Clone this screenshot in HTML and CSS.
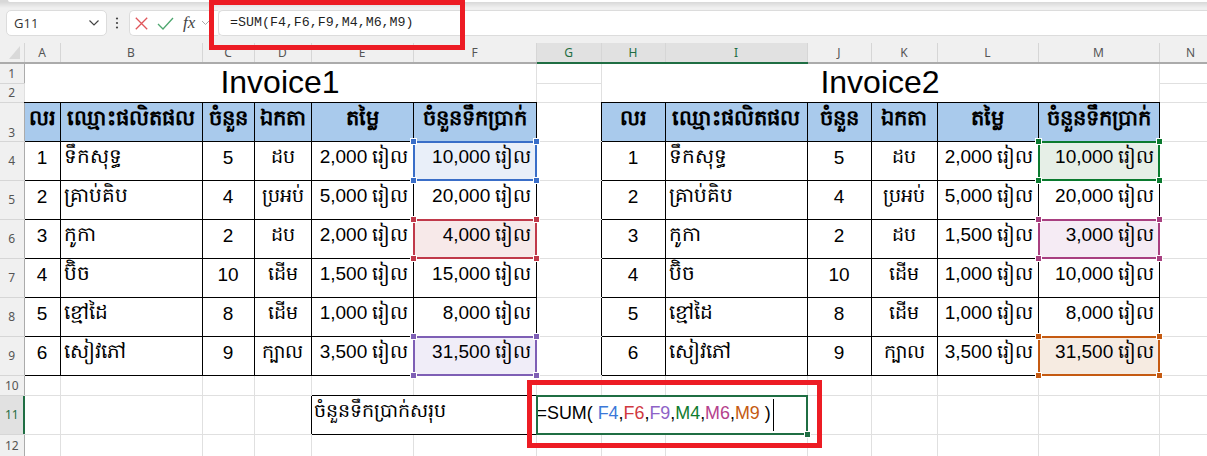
FILE: index.html
```html
<!DOCTYPE html>
<html lang="km">
<head>
<meta charset="utf-8">
<title>Invoice</title>
<link rel="stylesheet" href="styles.css">
</head>
<body>
<div class="ribbon"><div class="ribbon-lip"></div></div>
<div class="toolbar">
  <div class="namebox"><span>G11</span>
    <svg class="chev" width="12" height="8" viewBox="0 0 12 8"><path d="M1.5 1.5 6 6l4.5-4.5" fill="none" stroke="#444" stroke-width="1.2"/></svg>
  </div>
  <svg class="dots" width="4" height="14" viewBox="0 0 4 14"><circle cx="2" cy="2.5" r="1.1" fill="#444"/><circle cx="2" cy="7" r="1.1" fill="#444"/><circle cx="2" cy="11.5" r="1.1" fill="#444"/></svg>
  <div class="fxbox">
    <svg width="13" height="13" viewBox="0 0 13 13"><path d="M.8.8 12.2 12.2M12.2.8.8 12.2" stroke="#e0565b" stroke-width="1.3" fill="none"/></svg>
    <svg class="check" width="17" height="13" viewBox="0 0 17 13"><path d="M1 7 6 12 16 1" stroke="#4ea76f" stroke-width="1.3" fill="none"/></svg>
    <span class="fx">fx</span>
    <svg width="9" height="6" viewBox="0 0 9 6"><path d="M1 1l3.5 3.5L8 1" fill="none" stroke="#aaa" stroke-width="1"/></svg>
  </div>
  <div class="formula">=SUM(F4,F6,F9,M4,M6,M9)</div>
</div>
<table class="sheet">
  <colgroup>
    <col class="c-rh"><col class="c-a"><col class="c-b"><col class="c-c"><col class="c-d"><col class="c-e"><col class="c-f"><col class="c-g">
    <col class="c-h"><col class="c-i"><col class="c-j"><col class="c-k"><col class="c-l"><col class="c-m"><col class="c-n">
  </colgroup>
  <tr class="r-head">
    <th class="corner"><svg class="tri" width="11" height="13" viewBox="0 0 11 13"><path d="M11 0V13H0Z" fill="#d9d9d9"/></svg></th><th>A</th><th>B</th><th>C</th><th>D</th><th>E</th><th>F</th><th class="sel">G</th><th class="sel">H</th><th class="sel">I</th><th>J</th><th>K</th><th>L</th><th>M</th><th>N</th>
  </tr>
  <tr class="r-1">
    <th class="rh">1</th><td class="title" colspan="6" rowspan="2">Invoice1</td><td></td><td class="title" colspan="6" rowspan="2">Invoice2</td><td></td>
  </tr>
  <tr class="r-2">
    <th class="rh">2</th><td></td><td></td>
  </tr>
  <tr class="r-3">
    <th class="rh bottom">3</th>
    <td class="hd">លរ</td><td class="hd">ឈ្មោះផលិតផល</td><td class="hd">ចំនួន</td><td class="hd">ឯកតា</td><td class="hd">តម្លៃ</td><td class="hd">ចំនួនទឹកប្រាក់</td><td class="edge-r"></td>
    <td class="hd">លរ</td><td class="hd">ឈ្មោះផលិតផល</td><td class="hd">ចំនួន</td><td class="hd">ឯកតា</td><td class="hd">តម្លៃ</td><td class="hd">ចំនួនទឹកប្រាក់</td><td></td>
  </tr>
  <tr class="r-d">
    <th class="rh">4</th>
    <td class="b ctr">1</td><td class="b name">ទឹកសុទ្ធ</td><td class="b ctr">5</td><td class="b ctr">ដប</td><td class="b amt">2,000 រៀល</td><td class="b amt pick pick-blue">10,000 រៀល</td><td class="edge-r"></td>
    <td class="b ctr">1</td><td class="b name">ទឹកសុទ្ធ</td><td class="b ctr">5</td><td class="b ctr">ដប</td><td class="b amt">2,000 រៀល</td><td class="b amt pick pick-green">10,000 រៀល</td><td></td>
  </tr>
  <tr class="r-d">
    <th class="rh">5</th>
    <td class="b ctr">2</td><td class="b name">គ្រាប់គិប</td><td class="b ctr">4</td><td class="b ctr">ប្រអប់</td><td class="b amt">5,000 រៀល</td><td class="b amt">20,000 រៀល</td><td class="edge-r"></td>
    <td class="b ctr">2</td><td class="b name">គ្រាប់គិប</td><td class="b ctr">4</td><td class="b ctr">ប្រអប់</td><td class="b amt">5,000 រៀល</td><td class="b amt">20,000 រៀល</td><td></td>
  </tr>
  <tr class="r-d">
    <th class="rh">6</th>
    <td class="b ctr">3</td><td class="b name">កូកា</td><td class="b ctr">2</td><td class="b ctr">ដប</td><td class="b amt">2,000 រៀល</td><td class="b amt pick pick-red">4,000 រៀល</td><td class="edge-r"></td>
    <td class="b ctr">3</td><td class="b name">កូកា</td><td class="b ctr">2</td><td class="b ctr">ដប</td><td class="b amt">1,500 រៀល</td><td class="b amt pick pick-pink">3,000 រៀល</td><td></td>
  </tr>
  <tr class="r-d">
    <th class="rh">7</th>
    <td class="b ctr">4</td><td class="b name">ប៊ិច</td><td class="b ctr">10</td><td class="b ctr">ដើម</td><td class="b amt">1,500 រៀល</td><td class="b amt">15,000 រៀល</td><td class="edge-r"></td>
    <td class="b ctr">4</td><td class="b name">ប៊ិច</td><td class="b ctr">10</td><td class="b ctr">ដើម</td><td class="b amt">1,000 រៀល</td><td class="b amt">10,000 រៀល</td><td></td>
  </tr>
  <tr class="r-d">
    <th class="rh">8</th>
    <td class="b ctr">5</td><td class="b name">ខ្មៅដៃ</td><td class="b ctr">8</td><td class="b ctr">ដើម</td><td class="b amt">1,000 រៀល</td><td class="b amt">8,000 រៀល</td><td class="edge-r"></td>
    <td class="b ctr">5</td><td class="b name">ខ្មៅដៃ</td><td class="b ctr">8</td><td class="b ctr">ដើម</td><td class="b amt">1,000 រៀល</td><td class="b amt">8,000 រៀល</td><td></td>
  </tr>
  <tr class="r-d">
    <th class="rh">9</th>
    <td class="b ctr">6</td><td class="b name">សៀវភៅ</td><td class="b ctr">9</td><td class="b ctr">ក្បាល</td><td class="b amt">3,500 រៀល</td><td class="b amt pick pick-purple">31,500 រៀល</td><td class="edge-r"></td>
    <td class="b ctr">6</td><td class="b name">សៀវភៅ</td><td class="b ctr">9</td><td class="b ctr">ក្បាល</td><td class="b amt">3,500 រៀល</td><td class="b amt pick pick-orange">31,500 រៀល</td><td></td>
  </tr>
  <tr class="r-10">
    <th class="rh">10</th><td></td><td></td><td></td><td></td><td class="edge-b"></td><td class="edge-b"></td><td></td><td></td><td></td><td></td><td></td><td></td><td></td><td></td>
  </tr>
  <tr class="r-d">
    <th class="rh sel-row">11</th><td></td><td></td><td></td><td class="edge-r"></td>
    <td class="b name total" colspan="2">ចំនួនទឹកប្រាក់សរុប</td>
    <td class="editing" colspan="3"><span class="edit-text">=SUM( <i class="k-blue">F4</i>,<i class="k-red">F6</i>,<i class="k-purple">F9</i>,<i class="k-green">M4</i>,<i class="k-pink">M6</i>,<i class="k-orange">M9</i> )</span><span class="caret"></span></td>
    <td></td><td></td><td></td><td></td><td></td><td></td>
  </tr>
  <tr class="r-12">
    <th class="rh">12</th><td></td><td></td><td></td><td></td><td></td><td></td><td></td><td></td><td></td><td></td><td></td><td></td><td></td><td></td>
  </tr>
</table>
<div class="callout callout-top"></div>
<div class="callout callout-bottom"></div>
</body>
</html>
```
FILE: styles.css
```css
* { box-sizing: border-box; }
html, body { margin: 0; padding: 0; }
body {
  width: 1207px; height: 456px; overflow: hidden; position: relative;
  background: #fff; color: #000;
  font-family: "Liberation Sans", sans-serif;
}
.ribbon {
  height: 10px; padding-left: 8px;
  background: linear-gradient(#d8d8d8 20%, #f0f0f0 80%);
}
.ribbon-lip { height: 2px; background: #fff; border-radius: 0 0 0 4px; }
.toolbar {
  height: 33px; background: #f0f0f0; display: flex; align-items: flex-start;
  padding-left: 6px;
}
.namebox {
  width: 101px; height: 26px; background: #fff; border: 1px solid #dcdcdc; border-radius: 5px;
  display: flex; align-items: center; justify-content: space-between; padding: 0 6px 0 7px;
  font: 13px "Open Sans", sans-serif; color: #333;
}
.dots { margin: 6px 10px 0 8px; }
.fxbox {
  width: 89px; height: 26px; background: #fff; border: 1px solid #dcdcdc; border-radius: 5px 0 0 5px; border-right: 0;
  display: flex; align-items: center; gap: 9px; padding-left: 5px;
}
.fx { font: italic 17px "Liberation Serif", serif; color: #444; margin-right: -3px; }
.formula {
  flex: 1; height: 26px; background: #fff; border: 1px solid #dcdcdc; border-right: 0; border-radius: 5px 0 0 5px;
  padding: 3px 0 0 11px; font: 13.3px/18px "Liberation Mono", monospace; color: #1f1f1f;
}
.sheet { table-layout: fixed; border-collapse: collapse; width: 1222px; }
.c-rh { width: 24px; } .c-a { width: 36px; } .c-b { width: 142px; } .c-c { width: 52px; } .c-d { width: 57px; }
.c-e { width: 102px; } .c-f { width: 123px; } .c-g { width: 65px; } .c-h { width: 64px; } .c-i { width: 142px; }
.c-j { width: 64px; } .c-k { width: 66px; } .c-l { width: 101px; } .c-m { width: 121px; } .c-n { width: 63px; }
.r-head { height: 20px; }
.r-1 { height: 20px; } .r-2 { height: 19px; } .r-3 { height: 39px; } .r-d { height: 39px; }
.r-10 { height: 20px; } .r-12 { height: 22px; }
th {
  background: #f0f0f0; font: 400 12px "Noto Sans", sans-serif; color: #555; padding: 0;
  border: 1px solid #d6d6d6; border-top: 0;
}
.r-head th { border-bottom: 2px solid #ababab; }
th.corner { position: relative; border-left: 0; }
.tri { position: absolute; left: 9px; bottom: 3px; }
.r-head th.sel { background: #e1e1e1; color: #1f6e43; border-bottom: 2px solid #1f6e43; }
th.rh { border-left: 0; border-right: 1px solid #ababab; border-top: 1px solid #d6d6d6; }
th.bottom { vertical-align: bottom; }
th.sel-row { background: #e1e1e1; color: #1f6e43; position: relative; }
th.sel-row::after { content: ""; position: absolute; top: 0; bottom: 0; right: -1px; width: 2px; background: #1f6e43; }
td { border: 1px solid #e0e0e0; padding: 0; font-size: 19px; white-space: nowrap; }
.title { font-size: 32px; text-align: center; border-color: #fff #e0e0e0 #000; line-height: 1; padding-bottom: 2px; }
.hd { background: #a9caec; border: 1px solid #000; text-align: center; font-size: 21px; font-weight: 700; padding-bottom: 4px; }
.b { border: 1px solid #000; padding-bottom: 5px; }
.edge-r { border-right-color: #000; }
.edge-b { border-bottom-color: #000; }
.ctr { text-align: center; }
.name { padding-left: 3px; font-size: 20px; }
.amt { text-align: right; padding-right: 4px; }
.total { font-size: 19px; padding-left: 2px; }

.pick { position: relative; background: var(--fill); }
.pick::before {
  content: ""; position: absolute; inset: -1px;
  border: 2px solid var(--k); pointer-events: none;
}
.pick::after {
  content: ""; position: absolute; inset: -4px; pointer-events: none;
  background:
    linear-gradient(var(--k), var(--k)) left 1px top 1px / 5px 5px no-repeat,
    linear-gradient(var(--k), var(--k)) right 1px top 1px / 5px 5px no-repeat,
    linear-gradient(var(--k), var(--k)) left 1px bottom 1px / 5px 5px no-repeat,
    linear-gradient(var(--k), var(--k)) right 1px bottom 1px / 5px 5px no-repeat,
    linear-gradient(#fff, #fff) left top / 7px 7px no-repeat,
    linear-gradient(#fff, #fff) right top / 7px 7px no-repeat,
    linear-gradient(#fff, #fff) left bottom / 7px 7px no-repeat,
    linear-gradient(#fff, #fff) right bottom / 7px 7px no-repeat;
}
.pick-blue { --k: #3a6ec8; --fill: #e9eff9; }
.pick-red { --k: #c0394a; --fill: #f7e9e9; }
.pick-purple { --k: #7e5fb5; --fill: #f0edf8; }
.pick-green { --k: #0a7a2e; --fill: #e6efe7; }
.pick-pink { --k: #a83f80; --fill: #f5ebf4; }
.pick-orange { --k: #c55a11; --fill: #f6ebe1; }

.editing { position: relative; font-size: 17.9px; padding-left: 0; }
.editing::before {
  content: ""; position: absolute; inset: -1px; border: 2px solid #1f6e43; pointer-events: none;
}
.editing::after {
  content: ""; position: absolute; right: -3px; bottom: -3px; width: 5px; height: 5px; background: #1f6e43; border: 1px solid #fff; box-sizing: content-box; margin: -1px;
}
.edit-text { padding-bottom: 2px; }
.edit-text i { font-style: normal; }
.caret { display: inline-block; width: 1px; height: 32px; background: #000; vertical-align: middle; margin-left: 2px; }
.k-blue { color: #3b78d8; } .k-red { color: #d0393f; } .k-purple { color: #8e63c7; }
.k-green { color: #0f7b2d; } .k-pink { color: #b5418c; } .k-orange { color: #c55a11; }
.callout { position: absolute; border: 5px solid #ed1c24; pointer-events: none; }
.callout-top { left: 209px; top: 0; width: 256px; height: 50px; }
.callout-bottom { left: 527px; top: 380px; width: 295px; height: 68px; }
```
